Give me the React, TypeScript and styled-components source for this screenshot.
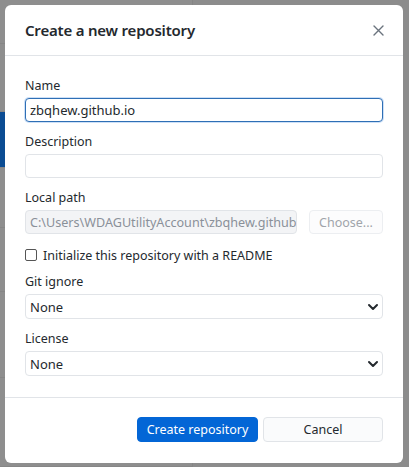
import React from "react";
import styled, { createGlobalStyle } from "styled-components";

const Global = createGlobalStyle`
  html, body { margin: 0; padding: 0; }
  body { width: 409px; height: 467px; overflow: hidden; background: #8d8d8d; }
  * { box-sizing: border-box; }
`;

const FONT = `"Noto Sans", "Open Sans", Arial, sans-serif`;

const Screen = styled.div`
  position: relative;
  width: 409px;
  height: 467px;
  overflow: hidden;
  background: #8d8d8d;
  font-family: ${FONT};
`;

/* dimmed application behind the modal */
const Backdrop = styled.div`
  display: flex;
  height: 100%;
`;

const Sidebar = styled.div`
  width: 193px;
  display: flex;
  flex-direction: column;
  background: #8e8e8e;
  border-right: 1px solid #858585;
`;

const SideRow = styled.div<{ $h: number; $selected?: boolean }>`
  height: ${(p) => p.$h}px;
  flex: none;
  background: ${(p) => (p.$selected ? "#0b4c93" : "transparent")};
  border-bottom: 1px solid #868686;
`;

const MainArea = styled.div`
  flex: 1;
  background: #8c8c8c;
`;

const Dialog = styled.div`
  position: absolute;
  left: 5px;
  top: 5px;
  width: 398px;
  background: #ffffff;
  border-radius: 6px;
  display: flex;
  flex-direction: column;
  color: #24292e;
  overflow: hidden;
`;

const Header = styled.div`
  height: 51px;
  border-bottom: 1px solid #e1e4e8;
  padding: 0 14px 0 20px;
  display: flex;
  align-items: center;
  justify-content: space-between;
`;

const Title = styled.h1`
  margin: 0;
  font-size: 15px;
  font-weight: 600;
  color: #24292e;
  letter-spacing: -0.2px;
`;

const CloseButton = styled.button`
  border: none;
  background: transparent;
  width: 22px;
  height: 22px;
  padding: 0;
  display: flex;
  align-items: center;
  justify-content: center;
`;

const Content = styled.div`
  padding: 21px 20px 21px;
  display: flex;
  flex-direction: column;
  gap: 11px;
`;

const Field = styled.div`
  display: flex;
  flex-direction: column;
`;

const Label = styled.label`
  font-size: 12.5px;
  line-height: 17px;
  margin-bottom: 4px;
  color: #24292e;
`;

const TextInput = styled.div<{ $focused?: boolean; $disabled?: boolean }>`
  height: 24px;
  flex: 1 1 auto;
  min-width: 0;
  border: 1px solid ${(p) => (p.$focused ? "#2f6fb5" : "#e1e4e8")};
  box-shadow: ${(p) => (p.$focused ? "0 0 0 1px rgba(3,102,214,0.2)" : "none")};
  border-radius: 4px;
  background: ${(p) => (p.$disabled ? "#f3f4f6" : "#ffffff")};
  color: ${(p) => (p.$disabled ? "#8a9099" : "#24292e")};
  font-size: ${(p) => (p.$disabled ? "12.6px" : "13px")};
  padding: 0 4px;
  display: flex;
  align-items: center;
  white-space: nowrap;
  overflow: hidden;
`;

const PathRow = styled.div`
  display: flex;
  gap: 12px;
`;

const ChooseButton = styled.button`
  width: 74px;
  height: 24px;
  flex: none;
  border: 1px solid #eceef1;
  border-radius: 4px;
  background: #fcfcfd;
  color: #a0a4aa;
  font-family: ${FONT};
  font-size: 12.5px;
  padding: 0;
`;

const CheckRow = styled.label`
  display: flex;
  align-items: center;
  gap: 6px;
  height: 20px;
  margin-bottom: -3px;
  font-size: 12.5px;
  color: #24292e;
`;

const CheckBox = styled.span`
  width: 12px;
  height: 12px;
  border: 1px solid #555;
  border-radius: 2px;
  background: #fff;
  flex: none;
`;

const SelectBox = styled.div`
  height: 25px;
  border: 1px solid #e1e4e8;
  border-radius: 4px;
  background: #fff;
  display: flex;
  align-items: center;
  justify-content: space-between;
  padding: 0 3px 0 4px;
  font-size: 13px;
  color: #24292e;
`;

const Footer = styled.div`
  border-top: 1px solid #e1e4e8;
  padding: 19px 20px 21px;
  display: flex;
  justify-content: flex-end;
  gap: 5px;
`;

const Button = styled.button<{ $primary?: boolean; $w: number }>`
  width: ${(p) => p.$w}px;
  height: 25px;
  border-radius: 4px;
  font-family: ${FONT};
  font-size: 12.5px;
  padding: 0;
  border: 1px solid ${(p) => (p.$primary ? "#0366d6" : "#e1e4e8")};
  background: ${(p) => (p.$primary ? "#0366d6" : "#fafbfc")};
  color: ${(p) => (p.$primary ? "#ffffff" : "#24292e")};
`;

const Chevron = () => (
  <svg width="12" height="12" viewBox="0 0 12 12">
    <path d="M2 4 L6 8 L10 4" fill="none" stroke="#24292e" strokeWidth="2" strokeLinecap="round" strokeLinejoin="round" />
  </svg>
);

const CloseIcon = () => (
  <svg width="11" height="11" viewBox="0 0 11 11">
    <path d="M1 1 L10 10 M10 1 L1 10" stroke="#6a737d" strokeWidth="1.4" strokeLinecap="round" />
  </svg>
);

export default function App() {
  return (
    <Screen>
      <Global />
      <Backdrop>
        <Sidebar>
          <SideRow $h={44} />
          <SideRow $h={68} />
          <SideRow $h={56} $selected />
          <SideRow $h={60} />
          <SideRow $h={64} />
          <SideRow $h={86} />
          <SideRow $h={89} />
        </Sidebar>
        <MainArea />
      </Backdrop>
      <Dialog>
        <Header>
          <Title>Create a new repository</Title>
          <CloseButton aria-label="Close">
            <CloseIcon />
          </CloseButton>
        </Header>
        <Content>
          <Field>
            <Label>Name</Label>
            <TextInput $focused>zbqhew.github.io</TextInput>
          </Field>
          <Field>
            <Label>Description</Label>
            <TextInput />
          </Field>
          <Field>
            <Label>Local path</Label>
            <PathRow>
              <TextInput $disabled>C:\Users\WDAGUtilityAccount\zbqhew.github.io</TextInput>
              <ChooseButton disabled>Choose...</ChooseButton>
            </PathRow>
          </Field>
          <CheckRow>
            <CheckBox />
            Initialize this repository with a README
          </CheckRow>
          <Field>
            <Label>Git ignore</Label>
            <SelectBox>
              <span>None</span>
              <Chevron />
            </SelectBox>
          </Field>
          <Field>
            <Label>License</Label>
            <SelectBox>
              <span>None</span>
              <Chevron />
            </SelectBox>
          </Field>
        </Content>
        <Footer>
          <Button $primary $w={121}>Create repository</Button>
          <Button $w={120}>Cancel</Button>
        </Footer>
      </Dialog>
    </Screen>
  );
}
